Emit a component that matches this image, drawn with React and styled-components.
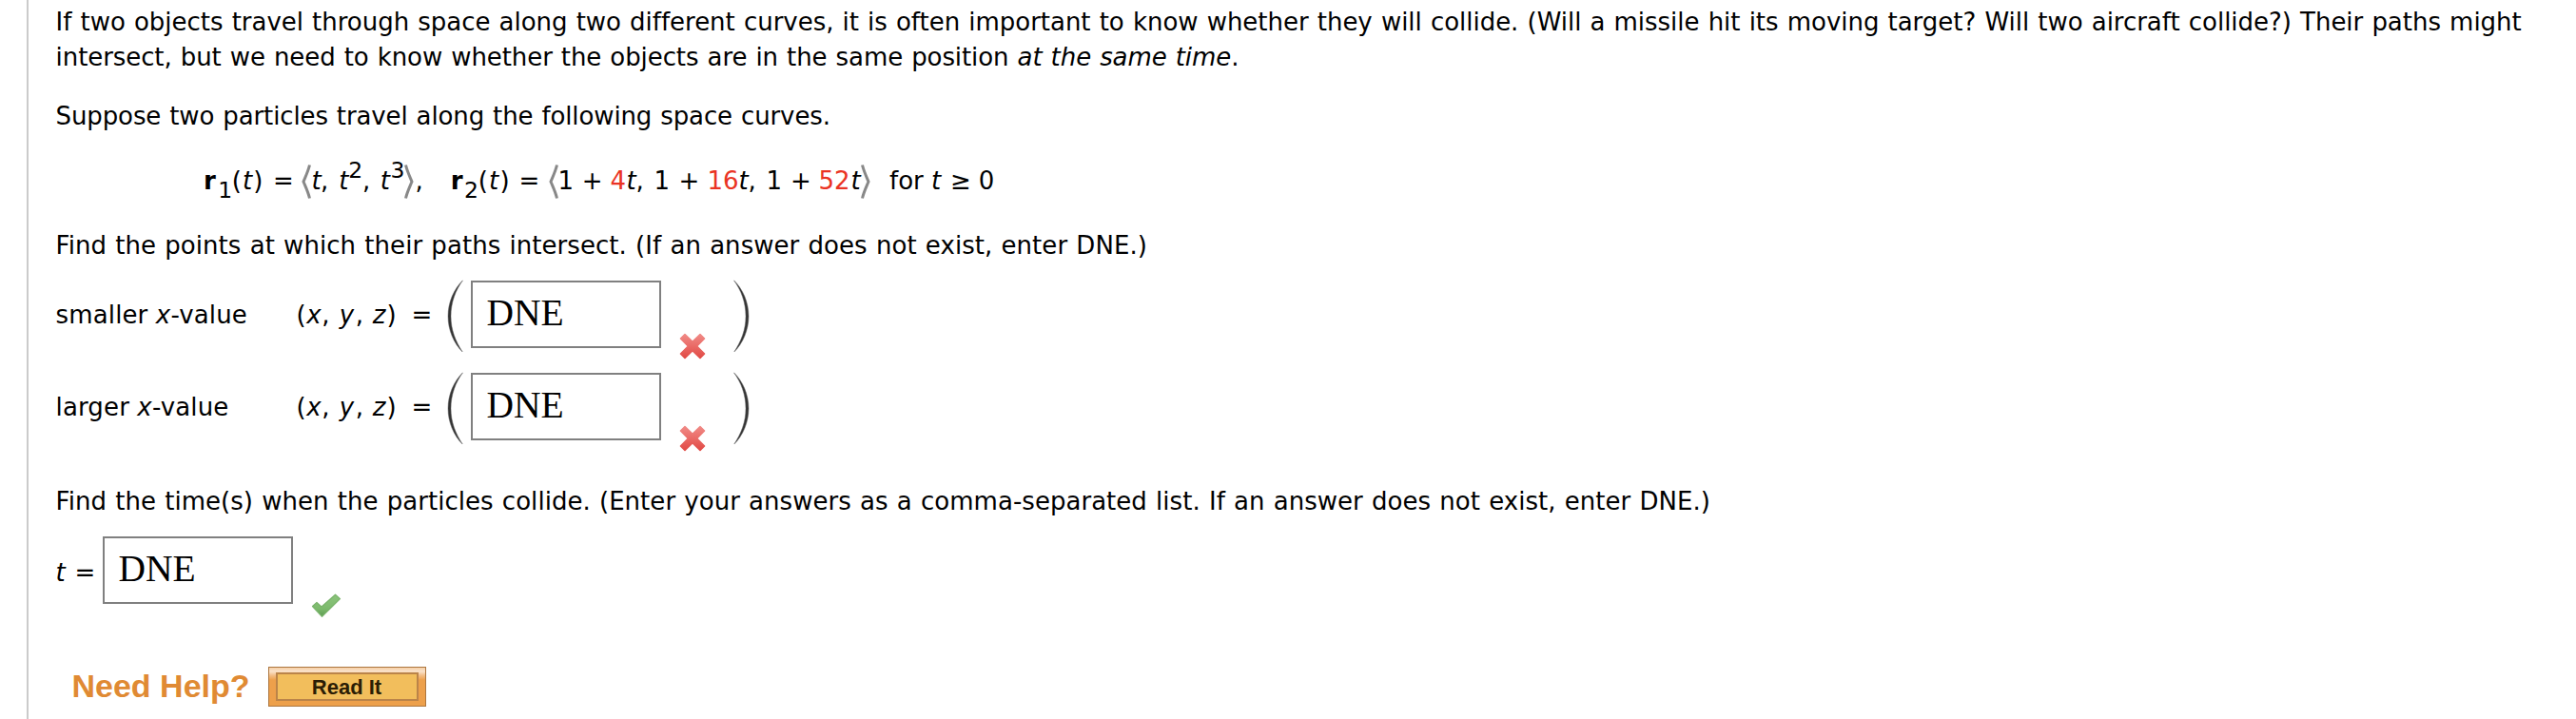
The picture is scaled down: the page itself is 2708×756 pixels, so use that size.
import React from "react";
import styled, { createGlobalStyle } from "styled-components";

const GlobalStyle = createGlobalStyle`
  body {
    margin: 0;
    background: #fff;
    color: #000;
    font-family: Verdana, "DejaVu Sans", sans-serif;
    font-size: 26px;
    line-height: 37px;
  }
`;

const Page = styled.main`
  box-sizing: border-box;
  width: 2708px;
  height: 756px;
  padding-left: 28px;
  overflow: hidden;
`;

const Question = styled.section`
  box-sizing: border-box;
  height: 756px;
  border-left: 2px solid #cbcbcb;
  padding: 5px 0 0 28.6px;
`;

const Line = styled.p`
  margin: ${(p) => p.$before || 0}px 0 ${(p) => p.$after || 0}px;
  height: 37px;
  white-space: nowrap;
  word-spacing: 0.9px;
  letter-spacing: ${(p) => p.$track || 0}px;
`;

const Formula = styled.div`
  display: flex;
  align-items: center;
  height: 37px;
  margin: 0 0 31px 155.4px;
  white-space: nowrap;
`;

const Term = styled.span`
  flex: none;
  width: ${(p) => p.$w}px;
  color: ${(p) => (p.$random ? "#ea3323" : "inherit")};
  font-weight: ${(p) => (p.$bold ? 700 : 400)};
  font-style: ${(p) => (p.$italic ? "italic" : "normal")};
`;

const Script = styled(Term)`
  font-size: 23.5px;
  padding-top: ${(p) => (p.$sub ? 19 : 0)}px;
  padding-bottom: ${(p) => (p.$sub ? 0 : 22)}px;
`;

const AngleSvg = styled.svg`
  flex: none;
  display: block;
  margin-right: ${(p) => p.$gap || 0}px;
`;

const AnswerRow = styled.div`
  display: flex;
  align-items: flex-start;
  height: 97px;
`;

const Label = styled.div`
  flex: none;
  width: ${(p) => p.$w}px;
  padding-top: ${(p) => p.$top}px;
  white-space: nowrap;
  letter-spacing: ${(p) => p.$track || 0}px;
`;

const Tuple = styled.div`
  display: flex;
  flex: none;
  padding-top: 19px;
`;

const AnswerBox = styled.div`
  box-sizing: border-box;
  flex: none;
  display: flex;
  align-items: center;
  width: 200px;
  height: 71px;
  margin-top: ${(p) => p.$top || 0}px;
  padding: 0 0 3px 14.5px;
  border: 2px solid #808080;
  font-family: "Liberation Serif", serif;
  font-size: 39.5px;
`;

const ParenSvg = styled.svg`
  flex: none;
  display: block;
  margin-right: ${(p) => p.$gap || 0}px;
`;

const MarkSvg = styled.svg`
  flex: none;
  display: block;
  margin: ${(p) => p.$m};
`;

const TimeRow = styled.div`
  display: flex;
  align-items: flex-start;
  height: 137px;
`;

const HelpRow = styled.div`
  display: flex;
  align-items: flex-start;
  padding-left: 16.9px;
  font-family: "Liberation Sans", Arial, sans-serif;
  font-weight: 700;
`;

const HelpTitle = styled.div`
  width: 206.5px;
  padding-top: 2px;
  color: #e08a33;
  font-size: 34px;
  white-space: nowrap;
`;

const HelpButton = styled.button`
  box-sizing: border-box;
  width: 166px;
  height: 42px;
  padding: 5px 7px 5px 7px;
  border: 1px solid #ac763f;
  background: linear-gradient(#f6cfa6 0, #fae3cb 4px, #f3bf8a 8px, #eda04b 13px, #eda04b 100%);
  font: inherit;
`;

const HelpButtonFace = styled.span`
  box-sizing: border-box;
  display: flex;
  align-items: center;
  justify-content: center;
  height: 30px;
  padding: 2px 1px 0 0;
  border: 2px solid #bb8449;
  background: #f2be5c;
  color: #2b1d05;
  font-size: 22px;
  line-height: 24px;
`;

const Angle = ({ close, gap }) => (
  <AngleSvg width="10" height="36" viewBox="0 0 10 36" $gap={gap}>
    <path
      d={close ? "M1.5 .5 C3 7 6 13 8 18 C6 23 3 29 1.5 35.5" : "M8.5 .5 C7 7 4 13 2 18 C4 23 7 29 8.5 35.5"}
      fill="none"
      stroke="#888"
      strokeWidth="3"
    />
  </AngleSvg>
);

const Paren = ({ close, gap }) => (
  <ParenSvg width="17" height="77" viewBox="0 0 17 77" $gap={gap}>
    <path
      d={
        close
          ? "M.5 .8 C10 10 16 24 16 38.5 C16 53 10 67 .8 76 C8 65 13 53 13 38.5 C13 24 8 11 .5 .8Z"
          : "M16.5 .8 C7 10 1 24 1 38.5 C1 53 7 67 16.2 76 C9 65 4 53 4 38.5 C4 24 9 11 16.5 .8Z"
      }
      fill="#333"
      stroke="#666"
      strokeWidth=".5"
    />
  </ParenSvg>
);

const Cross = () => (
  <MarkSvg width="28" height="28" viewBox="0 0 28 28" $m="55.5px 29.5px 0 19px">
    <defs>
      <linearGradient id="cross" x1="0" y1="0" x2="0" y2="1">
        <stop offset="0" stopColor="#f08a86" />
        <stop offset=".5" stopColor="#ea6a66" />
        <stop offset="1" stopColor="#e14a45" />
      </linearGradient>
    </defs>
    <path
      d="M6 1.5 L14 9.3 L22 1.5 L26.5 6 L18.6 14 L26.5 22 L22 26.5 L14 18.7 L6 26.5 L1.5 22 L9.4 14 L1.5 6Z"
      fill="url(#cross)"
      stroke="url(#cross)"
      strokeWidth="1.6"
      strokeLinejoin="round"
    />
  </MarkSvg>
);

const Check = () => (
  <MarkSvg width="32" height="26" viewBox="0 0 32 26" $m="59.5px 0 0 19px">
    <defs>
      <linearGradient id="check" x1="0" y1="0" x2="0" y2="1">
        <stop offset="0" stopColor="#8cc47c" />
        <stop offset=".65" stopColor="#7cba6c" />
        <stop offset="1" stopColor="#5c9a50" />
      </linearGradient>
    </defs>
    <path
      d="M1.5 13.5 L6 9.5 L11 14 L25.5 1.2 L30.5 5.6 L11.5 24.3Z"
      fill="url(#check)"
      stroke="#79b36b"
      strokeWidth="1.2"
      strokeLinejoin="round"
    />
  </MarkSvg>
);

const T = ({ w }) => <Term $w={w} $italic>t</Term>;

const PointAnswer = ({ size, value }) => (
  <AnswerRow>
    <Label $w={253} $top={19} $track={0.13}>
      {size} <i>x</i>-value
    </Label>
    <Tuple>
      <Term $w={10.7}>(</Term>
      <Term $w={16} $italic>x</Term>
      <Term $w={18.5}>,</Term>
      <Term $w={17} $italic>y</Term>
      <Term $w={18}>,</Term>
      <Term $w={14.6} $italic>z</Term>
      <Term $w={26.2}>)</Term>
      <Term $w={37.4}>=</Term>
    </Tuple>
    <Paren gap={8} />
    <AnswerBox $top={1}>{value}</AnswerBox>
    <Cross />
    <Paren close />
  </AnswerRow>
);

export default function App() {
  return (
    <>
      <GlobalStyle />
      <Page>
        <Question>
          <Line $track={-0.02}>
            If two objects travel through space along two different curves, it is often important to know whether they
            will collide. (Will a missile hit its moving target? Will two aircraft collide?) Their paths might
          </Line>
          <Line $after={25} $track={-0.08}>
            intersect, but we need to know whether the objects are in the same position <i>at the same time</i>.
          </Line>
          <Line $after={31} $track={-0.12}>Suppose two particles travel along the following space curves.</Line>
          <Formula>
            <Term $w={15.2} $bold>r</Term>
            <Script $w={14.6} $sub>1</Script>
            <Term $w={11.2}>(</Term>
            <T w={11.2} />
            <Term $w={20.8}>)</Term>
            <Term $w={30.5}>=</Term>
            <Angle />
            <T w={9.5} />
            <Term $w={19.2}>,</Term>
            <T w={10.2} />
            <Script $w={14.6}>2</Script>
            <Term $w={18.9}>,</Term>
            <T w={10.8} />
            <Script $w={14.7}>3</Script>
            <Angle close gap={1.2} />
            <Term $w={37.4}>,</Term>
            <Term $w={14.1} $bold>r</Term>
            <Script $w={14.8} $sub>2</Script>
            <Term $w={11.3}>(</Term>
            <T w={11.4} />
            <Term $w={20}>)</Term>
            <Term $w={32}>=</Term>
            <Angle gap={-1} />
            <Term $w={25.3}>1</Term>
            <Term $w={29.8}>+</Term>
            <Term $w={17} $random>4</Term>
            <T w={10} />
            <Term $w={19}>,</Term>
            <Term $w={26}>1</Term>
            <Term $w={30}>+</Term>
            <Term $w={33} $random>16</Term>
            <T w={10} />
            <Term $w={19}>,</Term>
            <Term $w={25.5}>1</Term>
            <Term $w={29.5}>+</Term>
            <Term $w={34} $random>52</Term>
            <T w={10.5} />
            <Angle close gap={20} />
            <Term $w={44}>for</Term>
            <T w={20} />
            <Term $w={29.8}>≥</Term>
            <Term $w={17}>0</Term>
          </Formula>
          <Line $after={17} $track={0.05}>
            Find the points at which their paths intersect. (If an answer does not exist, enter DNE.)
          </Line>
          <PointAnswer size="smaller" value="DNE" />
          <PointAnswer size="larger" value="DNE" />
          <Line $before={21} $after={18} $track={0.035}>
            Find the time(s) when the particles collide. (Enter your answers as a comma-separated list. If an answer
            does not exist, enter DNE.)
          </Line>
          <TimeRow>
            <Label $w={20} $top={20}>
              <i>t</i>
            </Label>
            <Label $w={29.4} $top={20}>=</Label>
            <AnswerBox>DNE</AnswerBox>
            <Check />
          </TimeRow>
          <HelpRow>
            <HelpTitle>Need Help?</HelpTitle>
            <HelpButton>
              <HelpButtonFace>Read It</HelpButtonFace>
            </HelpButton>
          </HelpRow>
        </Question>
      </Page>
    </>
  );
}
